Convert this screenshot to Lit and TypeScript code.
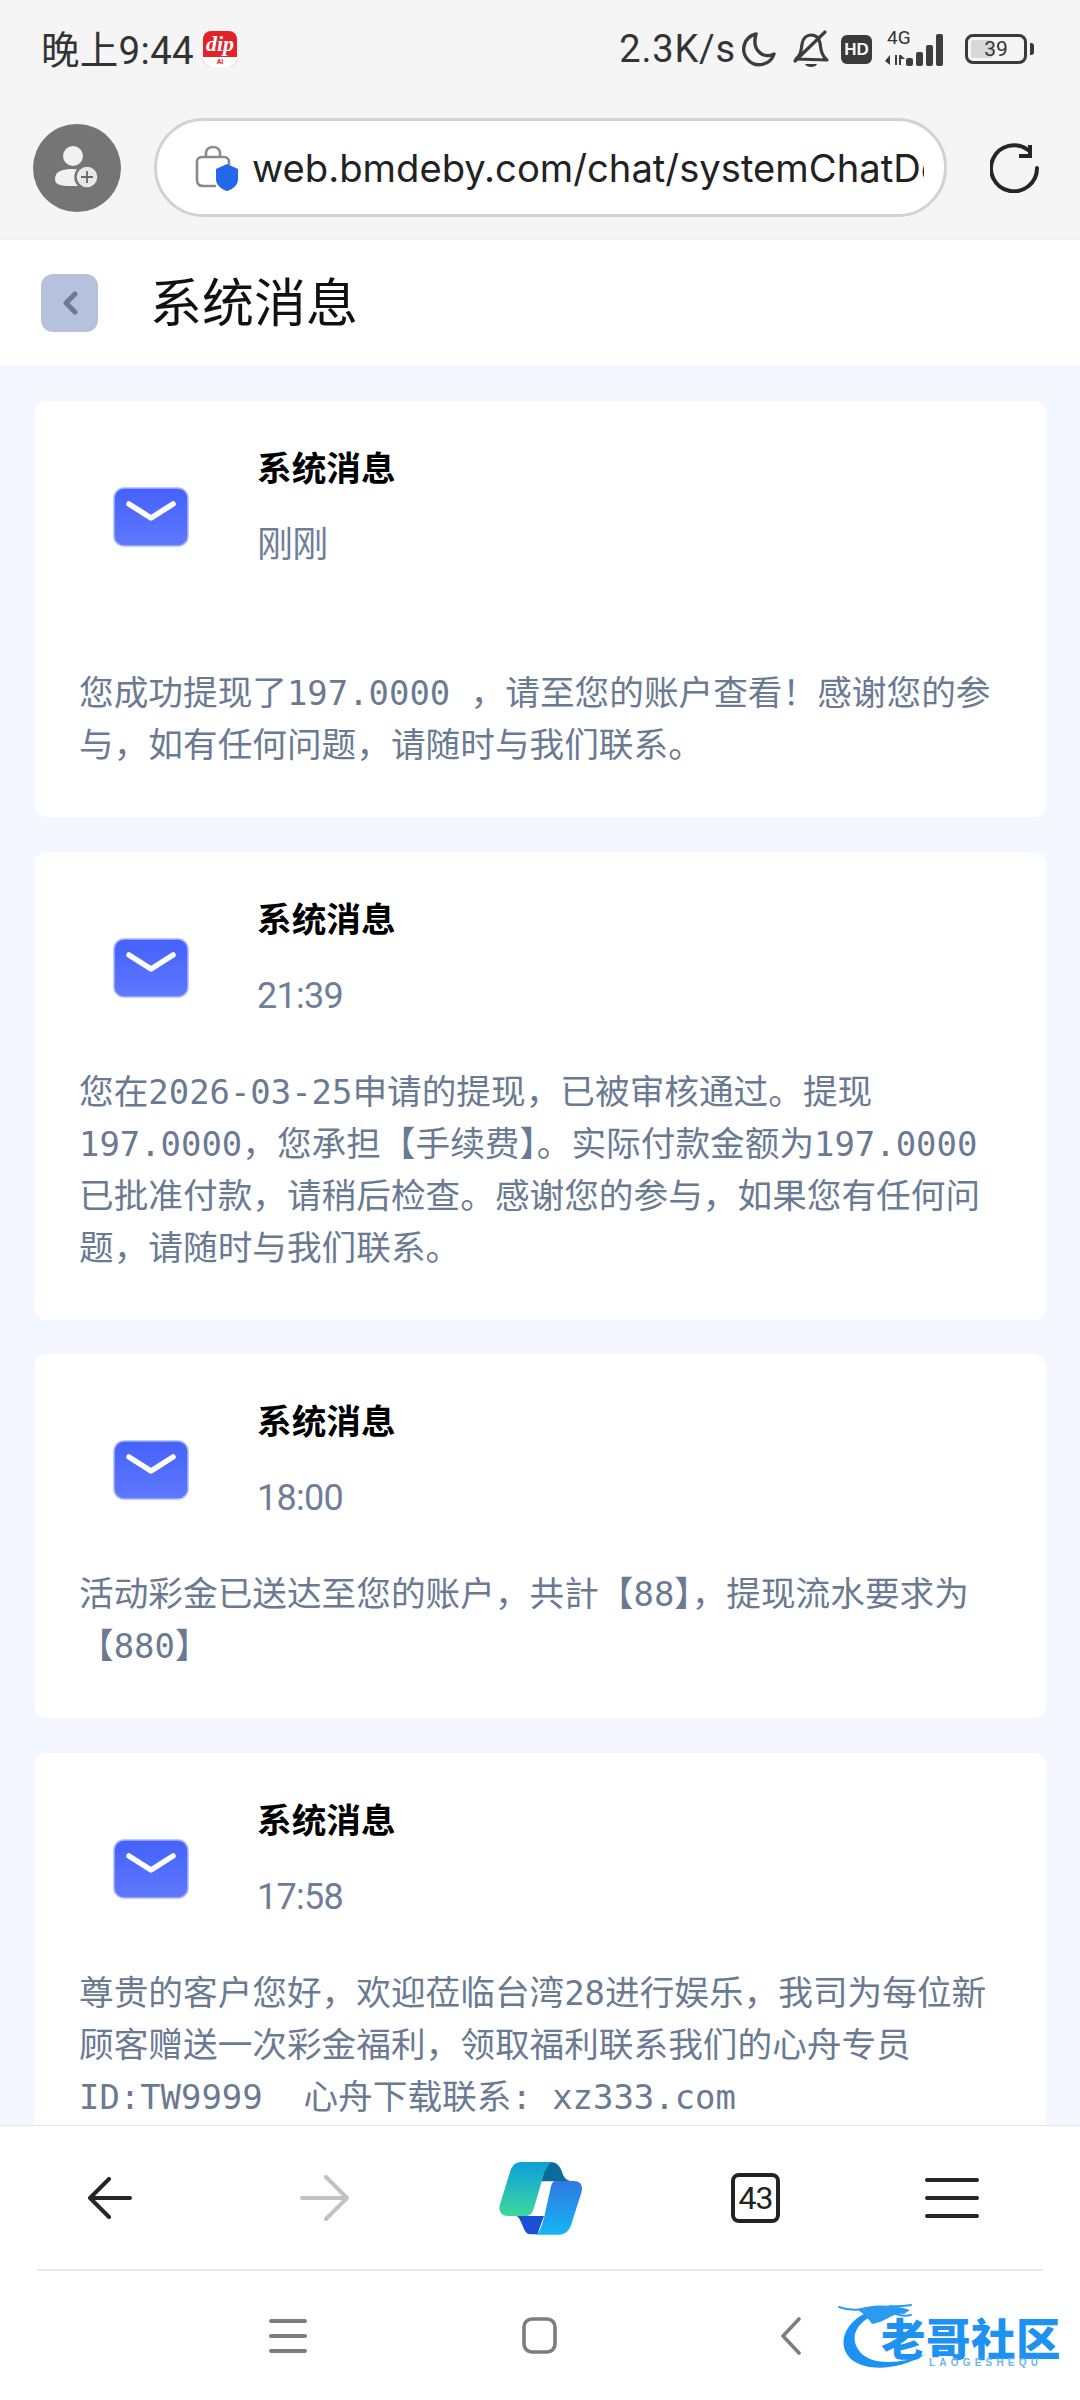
import { LitElement, html, css, svg } from 'lit';
import { customElement } from 'lit/decorators.js';

const messages = [
  {
    time: '刚刚',
    lines: [
      '\u00a0',
      '您成功提现了197.0000 ，请至您的账户查看！感谢您的参',
      '与，如有任何问题，请随时与我们联系。',
    ],
  },
  {
    time: '21:39',
    lines: [
      '您在2026-03-25申请的提现，已被审核通过。提现',
      '197.0000，您承担【手续费】。实际付款金额为197.0000',
      '已批准付款，请稍后检查。感谢您的参与，如果您有任何问',
      '题，请随时与我们联系。',
    ],
  },
  {
    time: '18:00',
    lines: ['活动彩金已送达至您的账户，共計【88】，提现流水要求为', '【880】'],
  },
  {
    time: '17:58',
    lines: [
      '尊贵的客户您好，欢迎莅临台湾28进行娱乐，我司为每位新',
      '顾客赠送一次彩金福利，领取福利联系我们的心舟专员',
      'ID:TW9999  心舟下载联系: xz333.com',
    ],
  },
];

const mailIcon = svg`
  <svg class="mail" viewBox="0 0 76 60">
    <defs>
      <linearGradient id="mailFill" x1="0" y1="0" x2="0" y2="1">
        <stop offset="0" stop-color="#4461fb" />
        <stop offset="1" stop-color="#6078fd" />
      </linearGradient>
    </defs>
    <rect x="1" y="1" width="74" height="58" rx="10" fill="url(#mailFill)" stroke="#a9b6fd" stroke-width="1.5" />
    <path d="M16 17 L38 31 L60 17" fill="none" stroke="#fff" stroke-width="5.5" stroke-linecap="round" stroke-linejoin="round" />
  </svg>
`;

@customElement('app-root')
export class AppRoot extends LitElement {
  static styles = css`
    :host {
      display: flex;
      flex-direction: column;
      width: 1080px;
      height: 2400px;
      overflow: hidden;
      position: relative;
      background: #f4f7ff;
      font-family: 'Noto Sans CJK SC', sans-serif;
    }
    svg {
      display: block;
      flex: none;
    }
    .chrome {
      background: #f5f5f5;
      height: 239px;
      flex: none;
    }
    .status {
      height: 98px;
      display: flex;
      align-items: center;
      padding: 0 46px 0 41px;
      color: #333;
      font-family: Roboto, 'Noto Sans CJK SC', sans-serif;
      font-size: 38px;
    }
    .clock {
      font-size: 38.5px;
      letter-spacing: 0.3px;
      margin-bottom: 4px;
    }
    .appicon {
      width: 34px;
      height: 36px;
      margin-left: 9px;
      border-radius: 8px;
      background: #e4222a;
      color: #fff;
      display: flex;
      flex-direction: column;
      align-items: center;
      overflow: hidden;
      font-family: 'Liberation Serif', serif;
      font-style: italic;
      font-weight: 700;
      font-size: 22px;
      line-height: 26px;
    }
    .appicon small {
      font-family: Roboto, sans-serif;
      font-style: normal;
      font-size: 7px;
      line-height: 10px;
      width: 100%;
      text-align: center;
      background: #fff;
      color: #e4222a;
    }
    .spacer {
      flex: 1;
    }
    .speed {
      letter-spacing: 0.8px;
    }
    .moon {
      width: 38px;
      height: 38px;
      margin-left: 4px;
    }
    .bell {
      width: 38px;
      height: 40px;
      margin-left: 14px;
    }
    .hd {
      width: 31px;
      height: 29px;
      margin-left: 11px;
      border-radius: 6px;
      background: #3a3a3a;
      color: #f5f5f5;
      font-family: 'Liberation Sans', sans-serif;
      font-size: 17px;
      font-weight: 700;
      line-height: 29px;
      text-align: center;
    }
    .net {
      width: 66px;
      height: 36px;
      margin-left: 12px;
      position: relative;
    }
    .net b {
      position: absolute;
      left: 3px;
      top: -3px;
      font-size: 19px;
      line-height: 20px;
      font-weight: 400;
    }
    .battery {
      width: 62px;
      height: 30px;
      margin-left: 15px;
      box-sizing: border-box;
      border: 3px solid #3a3a3a;
      border-radius: 8px;
      position: relative;
      font-size: 21px;
      line-height: 24px;
      text-align: center;
    }
    .battery i {
      position: absolute;
      left: 3px;
      top: 3px;
      bottom: 3px;
      width: 21px;
      background: #d8d8d8;
      border-radius: 2px;
    }
    .battery span {
      position: relative;
    }
    .nub {
      width: 4px;
      height: 12px;
      margin-left: 3px;
      background: #3a3a3a;
      border-radius: 0 3px 3px 0;
    }
    .urlrow {
      display: flex;
      align-items: center;
      height: 99px;
      margin-top: 20px;
      padding-left: 33px;
    }
    .avatar {
      width: 88px;
      height: 88px;
      border-radius: 50%;
      background: #757575;
      display: flex;
      align-items: center;
      justify-content: center;
      flex: none;
    }
    .pill {
      width: 793px;
      height: 99px;
      box-sizing: border-box;
      margin-left: 33px;
      padding-left: 38px;
      border: 3px solid #d2d2d2;
      border-radius: 50px;
      background: #fff;
      display: flex;
      align-items: center;
      flex: none;
    }
    .url {
      width: 672px;
      margin-left: 13px;
      overflow: hidden;
      white-space: nowrap;
      font-family: Inter, sans-serif;
      font-size: 38.2px;
      color: #222;
    }
    .reload {
      margin-left: 43px;
    }
    .header {
      height: 126px;
      flex: none;
      background: #fff;
      display: flex;
      align-items: center;
      padding-left: 41px;
      border-top: 1px solid #efefef;
      box-sizing: border-box;
    }
    .backbtn {
      width: 57px;
      height: 58px;
      border-radius: 12px;
      background: #b6c2dc;
      display: flex;
      align-items: center;
      justify-content: center;
    }
    .header h1 {
      margin: 0 0 6px 52px;
      font-size: 52px;
      font-weight: 400;
      line-height: 1;
      color: #111;
    }
    .list {
      flex: 1;
      min-height: 0;
      overflow: hidden;
      padding: 36px 34px 0 35px;
      display: flex;
      flex-direction: column;
      gap: 34.5px;
    }
    .card {
      flex: none;
      background: #fff;
      border-radius: 12px;
      padding: 39px 40px 49px 44px;
    }
    .head {
      display: flex;
      height: 172px;
    }
    .mail {
      width: 76px;
      height: 60px;
      margin: 47px 0 0 34px;
    }
    .meta {
      margin-left: 68px;
    }
    .title {
      font-size: 34.67px;
      font-weight: 700;
      line-height: 52px;
      color: #000;
    }
    .time {
      margin-top: 27px;
      font-family: Roboto, 'Noto Sans CJK SC', sans-serif;
      font-size: 36px;
      letter-spacing: -0.7px;
      line-height: 52px;
      color: #6f7e98;
    }
    .body {
      font-size: 34.67px;
      line-height: 52px;
      color: #6b7a93;
      white-space: pre;
    }
    .latin {
      font-family: 'DejaVu Sans Mono', monospace;
      font-size: 33.9px;
      line-height: 1;
    }
    .bottom {
      height: 275px;
      flex: none;
      background: #fff;
      border-top: 1px solid #e6e6e6;
      box-sizing: border-box;
    }
    .tools {
      height: 143px;
      display: flex;
      align-items: center;
      padding-left: 87px;
    }
    .fwd {
      margin-left: 168px;
    }
    .copilot {
      margin-left: 149px;
    }
    .tabs {
      width: 49px;
      height: 50px;
      margin-left: 148px;
      box-sizing: border-box;
      border: 4px solid #222;
      border-radius: 8px;
      font-family: Roboto, sans-serif;
      font-size: 32px;
      line-height: 42px;
      text-align: center;
      color: #222;
      letter-spacing: -1px;
    }
    .menu {
      margin-left: 145px;
    }
    .divider {
      height: 2px;
      margin: 0 37px;
      background: #e8e8e8;
    }
    .nav {
      height: 129px;
      display: flex;
      align-items: center;
      padding-left: 269px;
    }
    .square {
      margin-left: 215px;
    }
    .chev {
      margin-left: 223px;
    }
    .mark {
      position: absolute;
      left: 838px;
      top: 2300px;
      width: 224px;
      height: 72px;
    }
    .mark svg {
      position: absolute;
      left: 0;
      top: 0;
    }
    .mark b {
      position: absolute;
      left: 43px;
      top: 17px;
      font-size: 44.5px;
      line-height: 40px;
      font-weight: 900;
      letter-spacing: 0.5px;
      white-space: nowrap;
      color: #1d92f2;
    }
    .mark span {
      position: absolute;
      left: 91px;
      top: 57px;
      font-family: 'Liberation Sans', sans-serif;
      font-size: 10px;
      line-height: 11px;
      font-weight: 700;
      letter-spacing: 4.2px;
      white-space: nowrap;
      color: #6fb4ea;
    }
  `;

  private statusBar() {
    return html`
      <div class="status">
        <span class="clock">晚上9:44</span>
        <div class="appicon">dip<small>AI</small></div>
        <div class="spacer"></div>
        <span class="speed">2.3K/s</span>
        <svg class="moon" viewBox="0 0 38 38">
          <path d="M16 4 A15.5 15.5 0 1 0 34 24 C25 29 11 22 16 4 Z" fill="none" stroke="#3d3d3d" stroke-width="3.4" stroke-linejoin="round" />
        </svg>
        <svg class="bell" viewBox="0 0 38 40">
          <path d="M4 30 C9 26 9 22 10 15 C11 9 15 6 19 6 C24 6 27 9 28 14 C29 22 30 27 35 31 Z" fill="none" stroke="#3d3d3d" stroke-width="3.2" stroke-linejoin="round" />
          <path d="M3 32 L33 3" stroke="#3d3d3d" stroke-width="3.2" stroke-linecap="round" />
          <path d="M13 35 H25 C24 39 14 39 13 35 Z" fill="#3d3d3d" />
        </svg>
        <div class="hd">HD</div>
        <div class="net">
          <b>4G</b>
          <svg width="66" height="36" viewBox="0 0 66 36">
            <path d="M6 24 V34 L1 30 Z M11 24 H13 V34 H11 Z M17 24 L21 28 H17 V34 H15 V24 Z" fill="#3d3d3d" />
            <rect x="22" y="27" width="7" height="8" rx="2" fill="#3d3d3d" />
            <rect x="32" y="21" width="7" height="14" rx="2" fill="#3d3d3d" />
            <rect x="42" y="14" width="7" height="21" rx="2" fill="#3d3d3d" />
            <rect x="52" y="3" width="7" height="32" rx="2" fill="#3d3d3d" />
          </svg>
        </div>
        <div class="battery"><i></i><span>39</span></div>
        <div class="nub"></div>
      </div>
    `;
  }

  private urlBar() {
    return html`
      <div class="urlrow">
        <div class="avatar">
          <svg width="48" height="44" viewBox="0 0 48 44">
            <circle cx="20" cy="10" r="10" fill="#f1f1f1" />
            <path d="M2 33 C2 25 10 23 20 23 C30 23 34 26 34 33 C34 40 26 40 18 40 C8 40 2 39 2 33 Z" fill="#f1f1f1" />
            <circle cx="34" cy="31" r="11.5" fill="#e8e8e8" stroke="#757575" stroke-width="2.5" />
            <path d="M34 25 V37 M28 31 H40" stroke="#666" stroke-width="1.8" />
          </svg>
        </div>
        <div class="pill">
          <svg width="44" height="48" viewBox="0 0 44 48">
            <path d="M11 13 V9 C11 1 25 1 25 9 V13" fill="none" stroke="#8a8a8a" stroke-width="2.6" />
            <path d="M20 42 H8 C4 42 2 40 2 36 V18 C2 15 4 13 7 13 H29 C32 13 34 15 34 18 V21" fill="none" stroke="#8a8a8a" stroke-width="2.6" stroke-linecap="round" />
            <path d="M32 20 L43 25 V35 C43 41 38 45 32 47 C26 45 21 41 21 35 V25 Z" fill="#2368e8" />
          </svg>
          <div class="url">web.bmdeby.com/chat/systemChatDetail</div>
        </div>
        <svg class="reload" width="50" height="50" viewBox="0 0 50 50">
          <path d="M38 7 A23 23 0 1 0 47 25" fill="none" stroke="#262626" stroke-width="4" stroke-linecap="round" />
          <path d="M40 2 V13 H29" fill="none" stroke="#262626" stroke-width="4" />
        </svg>
      </div>
    `;
  }

  // ascii runs are narrower than the cjk size, so they get their own span
  private bodyLine(line: string) {
    const parts = line.split(/([\x21-\x7e ]+)/);
    return html`<div>${parts.map((p, i) => (i % 2 ? html`<span class="latin">${p}</span>` : p))}</div>`;
  }

  private card(m: { time: string; lines: string[] }) {
    return html`
      <div class="card">
        <div class="head">
          ${mailIcon}
          <div class="meta">
            <div class="title">系统消息</div>
            <div class="time">${m.time}</div>
          </div>
        </div>
        <div class="body">${m.lines.map((l) => this.bodyLine(l))}</div>
      </div>
    `;
  }

  private toolbar() {
    return html`
      <div class="tools">
        <svg width="45" height="42" viewBox="0 0 45 42">
          <path d="M43 21 H3 M22 2 L3 21 L22 40" fill="none" stroke="#262626" stroke-width="4" stroke-linecap="round" stroke-linejoin="round" />
        </svg>
        <svg class="fwd" width="50" height="46" viewBox="0 0 50 46">
          <path d="M2 23 H47 M26 2 L47 23 L26 44" fill="none" stroke="#c2c2c2" stroke-width="4" stroke-linecap="round" stroke-linejoin="round" />
        </svg>
        <svg class="copilot" width="84" height="74" viewBox="55 35 252 222">
          <defs>
            <linearGradient id="cpA" x1="0" y1="0" x2="0" y2="1">
              <stop offset="0" stop-color="#0c9fdc" />
              <stop offset="1" stop-color="#3fd79b" />
            </linearGradient>
            <linearGradient id="cpB" x1="0" y1="0" x2="0" y2="1">
              <stop offset="0" stop-color="#2f78e2" />
              <stop offset="1" stop-color="#16b6f4" />
            </linearGradient>
          </defs>
          <path d="M190 38 H208 C228 38 238 50 245 70 C250 86 258 95 280 96 H180 C185 70 195 45 208 38 Z" fill="#0b6b9c" />
          <path d="M108 200 H190 L170 255 H150 C132 255 130 235 122 220 C118 210 114 204 108 200 Z" fill="#1b4fd6" />
          <path d="M122 38 H215 C200 45 192 65 185 90 L160 175 C155 192 148 200 135 200 H82 C62 200 52 185 58 165 L88 68 C93 50 104 38 122 38 Z" fill="url(#cpA)" />
          <path d="M222 95 H280 C300 95 308 110 302 130 L272 225 C266 244 254 256 236 256 H165 C178 250 184 225 190 205 L210 115 C213 103 216 97 222 95 Z" fill="url(#cpB)" />
        </svg>
        <div class="tabs">43</div>
        <svg class="menu" width="54" height="42" viewBox="0 0 54 42">
          <path d="M2 3 H52 M2 21 H52 M2 39 H52" stroke="#262626" stroke-width="4" stroke-linecap="round" />
        </svg>
      </div>
    `;
  }

  private navBar() {
    return html`
      <div class="nav">
        <svg width="38" height="36" viewBox="0 0 38 36">
          <path d="M2 3 H36 M2 18 H36 M2 33 H36" stroke="#7d7d7d" stroke-width="4" stroke-linecap="round" />
        </svg>
        <svg class="square" width="35" height="37" viewBox="0 0 35 37">
          <rect x="2" y="2" width="31" height="33" rx="8" fill="none" stroke="#7d7d7d" stroke-width="3.6" />
        </svg>
        <svg class="chev" width="22" height="38" viewBox="0 0 22 38">
          <path d="M19 2 L3 19 L19 36" fill="none" stroke="#7d7d7d" stroke-width="3.6" stroke-linecap="round" stroke-linejoin="round" />
        </svg>
      </div>
    `;
  }

  render() {
    return html`
      <div class="chrome">${this.statusBar()}${this.urlBar()}</div>
      <div class="header">
        <div class="backbtn">
          <svg width="16" height="24" viewBox="0 0 16 24">
            <path d="M13 3 L4 12 L13 21" fill="none" stroke="#6d7a90" stroke-width="5" stroke-linecap="round" stroke-linejoin="round" />
          </svg>
        </div>
        <h1>系统消息</h1>
      </div>
      <div class="list">${messages.map((m) => this.card(m))}</div>
      <div class="bottom">
        ${this.toolbar()}
        <div class="divider"></div>
        ${this.navBar()}
      </div>
      <div class="mark">
        <svg width="224" height="72" viewBox="0 0 224 72">
          <path d="M26 14 C6 24 -2 46 14 60 C30 72 62 70 88 54 C64 64 34 66 22 52 C12 40 16 26 32 17 Z" fill="#1d92f2" />
          <path d="M20 10 C30 4 55 4 72 10 L66 14 C55 12 48 22 34 24 C30 18 26 14 20 10 Z" fill="#2a9bf0" />
          <path d="M1 7 C12 11 20 10 30 8 M52 6 C60 7 66 6 73 5 M58 14 C63 16 68 16 73 15" fill="none" stroke="#2a9bf0" stroke-width="2" stroke-linecap="round" />
        </svg>
        <b>老哥社区</b>
        <span>LAOGESHEQU</span>
      </div>
    `;
  }
}
